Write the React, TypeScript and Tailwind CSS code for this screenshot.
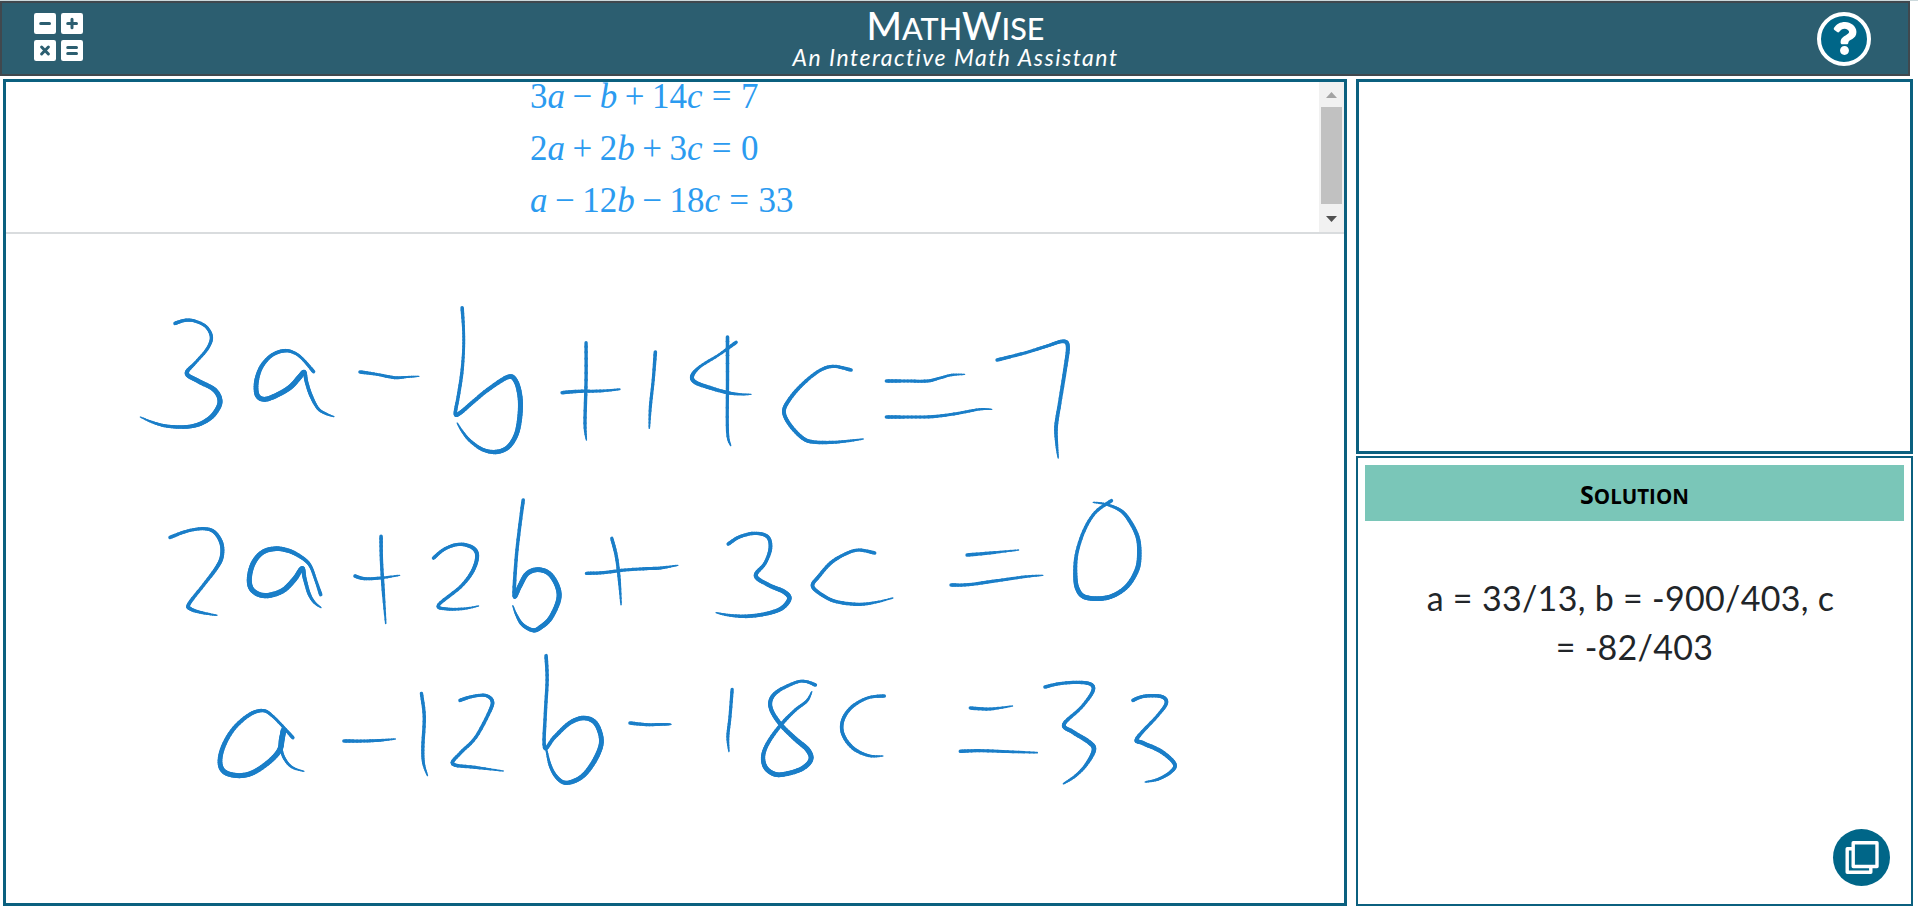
import React from "react";
import { FaQuestion } from "react-icons/fa";

type Sample = [x: number, y: number, width: number];

interface InkGroup {
  x: number;
  y: number;
  strokes: Sample[][];
}

const UNIT_X = 2.8;
const UNIT_Y = 3;
const PEN_SCALE = 1.2;

const INK: InkGroup[] = [
  {
    x: 94,
    y: 46,
    strokes: [
      [[210, 130, 3], [238, 121, 2.8], [265, 123, 2.5], [297, 140, 2.5], [312, 172, 2.8], [300, 207, 2.6], [268, 247, 2.4], [243, 280, 3.6], [275, 303, 3.8], [321, 330, 4], [336, 366, 4.2], [318, 404, 4], [288, 428, 3.6], [255, 439, 3.2], [220, 441, 3], [180, 437, 2.6], [145, 426, 2], [113, 411, 1]],
      [[598, 275, 3], [570, 240, 2.4], [547, 220, 2.4], [518, 212, 3], [482, 225, 3], [452, 260, 3.4], [438, 305, 4], [440, 345, 4], [460, 358, 4], [492, 347, 4.2], [532, 322, 4.4], [558, 292, 4.4], [572, 276, 3.4], [578, 305, 3], [590, 345, 3], [610, 385, 2.4], [632, 401, 2], [655, 410, 1]],
      [[728, 276, 3], [775, 283, 2.4], [825, 293, 2.6], [860, 291, 1.8], [893, 289, 1]],
      [[1014, 83, 3], [1018, 150, 2.4], [1018, 210, 2.4], [1013, 280, 2.8], [1003, 350, 2.8], [995, 401, 3], [1008, 399, 3.4], [1040, 370, 3.2], [1085, 330, 3.4], [1142, 291, 3.8], [1164, 303, 4], [1176, 350, 4.2], [1176, 405, 4.2], [1166, 462, 4], [1142, 502, 3.8], [1108, 516, 3.6], [1070, 508, 3], [1035, 481, 2.6], [1015, 455, 2], [1000, 429, 1]],
      [[1361, 188, 2.8], [1361, 300, 2.8], [1358, 430, 2.8], [1362, 480, 1]],
      [[1294, 338, 3], [1340, 334, 2.8], [1400, 333, 2.4], [1455, 328, 1.6]],
      [[1555, 216, 3], [1549, 300, 2.6], [1541, 380, 2.6], [1538, 445, 1.2]],
    ],
  },
  {
    x: 634,
    y: 46,
    strokes: [
      [[269, 187, 3], [220, 225, 2.2], [168, 260, 2.4], [146, 288, 3.4], [155, 307, 3.4], [195, 323, 3.2], [245, 338, 2.8], [283, 343, 1.8], [311, 343, 1]],
      [[245, 171, 3], [245, 300, 2.8], [245, 455, 2.6], [254, 497, 1]],
      [[591, 270, 3], [540, 259, 2.6], [498, 275, 2.8], [450, 318, 3], [416, 362, 3.2], [403, 396, 3.2], [420, 435, 3.2], [455, 474, 3.2], [485, 486, 3], [540, 487, 2.6], [590, 482, 2], [625, 477, 1]],
      [[690, 303, 3], [750, 303, 2.6], [805, 303, 2.6], [840, 294, 2.2], [872, 285, 2], [909, 283, 1]],
      [[690, 411, 3], [750, 411, 2.6], [820, 410, 2.6], [890, 400, 2.4], [950, 388, 2], [985, 388, 1]],
      [[1000, 240, 3], [1080, 218, 2.6], [1140, 198, 2.8], [1184, 184, 3], [1198, 200, 3.4], [1190, 270, 3.2], [1175, 370, 3], [1165, 440, 3.2], [1167, 495, 2.4], [1171, 534, 1]],
    ],
  },
  {
    x: 94,
    y: 246,
    strokes: [
      [[196, 172, 3], [245, 153, 2.6], [290, 146, 2.6], [320, 156, 3], [340, 190, 3.4], [341, 230, 3.4], [326, 264, 3.2], [290, 315, 2.8], [249, 372, 3], [254, 387, 3], [285, 398, 2.4], [327, 406, 1.2]],
      [[618, 344, 3], [604, 300, 2.4], [590, 260, 2.6], [572, 238, 3], [535, 215, 3.6], [494, 206, 4], [455, 217, 4], [428, 252, 4.2], [418, 300, 4.2], [428, 332, 4.2], [462, 347, 4.4], [510, 333, 4.4], [545, 297, 4.4], [566, 265, 3.8], [573, 295, 3.2], [585, 340, 2.8], [600, 367, 2.2], [619, 383, 1]],
      [[787, 169, 3], [788, 240, 2.8], [793, 330, 2.8], [800, 430, 1.2]],
      [[714, 288, 3], [740, 296, 2.6], [785, 294, 2.4], [839, 286, 1]],
      [[934, 234, 3], [965, 207, 2.6], [1005, 193, 2.8], [1042, 202, 3.2], [1056, 227, 3.4], [1044, 272, 3.2], [1010, 320, 2.8], [948, 375, 2.8], [972, 387, 2.6], [1020, 386, 2], [1060, 378, 1]],
      [[1185, 60, 3], [1174, 150, 2.8], [1165, 240, 2.8], [1160, 347, 3.2], [1175, 319, 4], [1195, 282, 4], [1225, 269, 4], [1258, 281, 4], [1281, 320, 4.2], [1284, 360, 4.2], [1262, 413, 4], [1236, 440, 4], [1213, 451, 3.4], [1183, 434, 3], [1166, 405, 2], [1156, 377, 1]],
      [[1433, 175, 2.8], [1446, 230, 2.8], [1454, 300, 2.6], [1459, 374, 1.2]],
      [[1362, 280, 2.8], [1410, 278, 2.6], [1470, 270, 2.6], [1530, 266, 2.6], [1570, 264, 2.6], [1618, 256, 1]],
      [[540, 773, 3], [515, 743, 2.4], [485, 710, 2.4], [458, 692, 2.8], [420, 703, 3.2], [375, 745, 3.4], [345, 800, 3.8], [336, 848, 4], [350, 877, 4.2], [390, 887, 4.2], [430, 877, 4.2], [475, 844, 4.2], [503, 810, 4.4], [509, 778, 4.8], [514, 750, 4.6]],
      [[505, 800, 2.6], [516, 835, 2.4], [538, 862, 2], [571, 874, 1]],
      [[683, 783, 3], [740, 783, 2.6], [785, 781, 2.4], [827, 777, 1]],
      [[900, 640, 2.8], [908, 710, 2.8], [904, 800, 2.8], [906, 850, 2.4], [917, 887, 1]],
      [[1008, 661, 3], [1040, 650, 2.6], [1078, 646, 2.6], [1098, 662, 3], [1092, 692, 3], [1052, 772, 2.8], [1010, 818, 2.8], [988, 852, 3], [1050, 862, 2.6], [1129, 873, 1]],
      [[1249, 527, 3], [1252, 600, 2.8], [1247, 700, 2.8], [1245, 803, 3], [1272, 772, 3.2], [1315, 729, 3.6], [1355, 714, 3.8], [1388, 730, 4], [1404, 780, 4], [1392, 827, 4.2], [1362, 877, 4], [1332, 901, 3.8], [1300, 908, 3.4], [1276, 888, 3], [1260, 855, 2.6], [1250, 810, 1.6]],
      [[1484, 729, 3], [1530, 734, 2.6], [1580, 733, 2.4], [1599, 733, 1]],
    ],
  },
  {
    x: 634,
    y: 246,
    strokes: [
      [[247, 192, 3], [278, 171, 2.8], [320, 160, 2.8], [357, 170, 3], [365, 205, 3.2], [350, 250, 2.8], [324, 287, 3.4], [358, 314, 3.4], [404, 336, 3.8], [418, 357, 3.8], [395, 386, 3.6], [350, 402, 3.2], [295, 409, 3], [245, 405, 2.2], [213, 398, 1]],
      [[657, 219, 3], [612, 210, 2.6], [575, 222, 2.6], [535, 248, 3], [500, 290, 3], [483, 318, 3], [510, 345, 3], [550, 365, 2.8], [610, 373, 2.8], [660, 367, 2], [708, 354, 1]],
      [[916, 225, 3], [980, 219, 2.6], [1060, 210, 1]],
      [[871, 315, 3], [920, 314, 2.6], [1000, 302, 2.6], [1080, 290, 2.2], [1128, 286, 1]],
      [[1320, 62, 3], [1275, 97, 2.6], [1243, 153, 2.8], [1222, 225, 3], [1219, 290, 3.6], [1225, 327, 3.8], [1243, 350, 4], [1283, 356, 4], [1325, 347, 3.8], [1365, 317, 3.8], [1392, 268, 4], [1398, 220, 3.8], [1393, 170, 3.4], [1370, 121, 3.2], [1345, 91, 2.8], [1305, 73, 2], [1269, 67, 1]],
      [[258, 628, 2.8], [252, 710, 2.6], [246, 770, 2.6], [249, 815, 1]],
      [[491, 615, 3], [466, 605, 2.4], [440, 606, 2.4], [388, 632, 3], [366, 660, 3.4], [369, 693, 3.4], [396, 736, 3.6], [435, 777, 4], [470, 810, 4.2], [478, 840, 4], [450, 868, 4], [395, 884, 4], [366, 877, 4], [348, 855, 3.8], [346, 820, 3.4], [365, 777, 3.2], [400, 728, 3], [435, 690, 2.6], [467, 663, 2.4], [481, 635, 1]],
      [[684, 648, 3], [640, 653, 2.4], [594, 680, 2.8], [568, 720, 3], [568, 762, 3], [596, 804, 3], [640, 827, 2.4], [680, 828, 1]],
      [[925, 684, 3], [980, 687, 2.6], [1043, 678, 1]],
      [[897, 814, 3], [950, 812, 2.6], [1030, 815, 2.4], [1112, 818, 1.4]],
      [[1134, 621, 3], [1175, 611, 2.6], [1230, 607, 2.8], [1264, 614, 3], [1267, 636, 3], [1235, 683, 2.6], [1187, 733, 3.2], [1212, 756, 3.6], [1258, 787, 3.8], [1271, 810, 3.8], [1250, 853, 2.8], [1220, 887, 2.4], [1186, 911, 1.4]],
      [[1380, 661, 3], [1410, 649, 2.8], [1458, 649, 3], [1474, 668, 3], [1450, 706, 2.6], [1392, 775, 3.2], [1408, 789, 3.6], [1460, 815, 3.6], [1497, 852, 3.2], [1485, 877, 2.8], [1450, 898, 2.4], [1415, 906, 1.2]],
    ],
  },
];

const STEPS = 6;

function spline(a: number, b: number, c: number, d: number, t: number) {
  return 0.5 * (2 * b + (c - a) * t + (2 * a - 5 * b + 4 * c - d) * t * t + (3 * b - a - 3 * c + d) * t * t * t);
}

function smooth(points: Sample[]): Sample[] {
  const out: Sample[] = [points[0]];
  for (let i = 0; i < points.length - 1; i++) {
    const p0 = points[Math.max(0, i - 1)];
    const p1 = points[i];
    const p2 = points[i + 1];
    const p3 = points[Math.min(points.length - 1, i + 2)];
    for (let s = 1; s <= STEPS; s++) {
      const t = s / STEPS;
      out.push([
        spline(p0[0], p1[0], p2[0], p3[0], t),
        spline(p0[1], p1[1], p2[1], p3[1], t),
        p1[2] + (p2[2] - p1[2]) * t,
      ]);
    }
  }
  return out;
}

function Stroke({ points, x, y }: { points: Sample[]; x: number; y: number }) {
  const path = smooth(points).map(([px, py, w]): Sample => [x + px / UNIT_X, y + py / UNIT_Y, w * PEN_SCALE]);
  return (
    <g>
      {path.slice(1).map((p, i) => (
        <line key={i} x1={path[i][0]} y1={path[i][1]} x2={p[0]} y2={p[1]} strokeWidth={(path[i][2] + p[2]) / 2} />
      ))}
    </g>
  );
}

function InkCanvas() {
  return (
    <svg className="block h-full w-full" viewBox="0 0 1338 669" stroke="#1a7ec8" strokeLinecap="round" fill="none">
      {INK.map((g, i) => g.strokes.map((s, j) => <Stroke key={`${i}-${j}`} points={s} x={g.x} y={g.y} />))}
    </svg>
  );
}

function Logo() {
  return (
    <svg className="mb-1 h-12 w-[49px]" viewBox="0 0 49 48">
      <g fill="#fff">
        <rect x="0" y="0" width="22" height="21" rx="2.2" />
        <rect x="27" y="0" width="22" height="21" rx="2.2" />
        <rect x="0" y="27" width="22" height="21" rx="2.2" />
        <rect x="27" y="27" width="22" height="21" rx="2.2" />
      </g>
      <g stroke="#2c5e70" strokeWidth="3" strokeLinecap="round">
        <path d="M6.7 10.5h8.8M33.7 10.5h8.8M38 6.2v8.6M7.6 34l6.8 7M14.4 34l-6.8 7M33.7 34.5h8.8M33.7 40.5h8.8" />
      </g>
    </svg>
  );
}

function Var({ children }: { children: string }) {
  return <span className="italic">{children}</span>;
}

function Op({ children }: { children: string }) {
  return <span className="mx-[7.5px]">{children}</span>;
}

function Eq() {
  return <span className="mx-[9.3px]">=</span>;
}

function Header() {
  return (
    <header className="flex h-[75px] w-[1910px] items-center justify-between border-2 border-[#40484e] bg-[#2c5e70] pr-[37px] pl-8">
      <Logo />
      <div className="mb-1 ml-[11px] flex flex-col items-center text-white">
        <h1 className="font-[Lato,sans-serif] text-[38px] leading-[42px] font-medium whitespace-nowrap">
          M<span className="text-[30.5px] uppercase">ath</span>W<span className="text-[30.5px] uppercase">ise</span>
        </h1>
        <p className="-mt-1 font-[Lato,sans-serif] text-[23px] leading-6 tracking-[1.5px] whitespace-nowrap italic">
          An Interactive Math Assistant
        </p>
      </div>
      <button className="flex size-[54px] items-center justify-center rounded-full border-4 border-white bg-[#006688] text-white">
        <FaQuestion className="h-[33px] w-[25px]" />
      </button>
    </header>
  );
}

function Scrollbar() {
  return (
    <div className="flex w-[25px] flex-col items-center bg-[#f1f1f1]">
      <svg className="h-[25px] w-[25px]" viewBox="0 0 25 25">
        <path d="M7 16L12.5 10L18 16z" fill="#a3a3a3" />
      </svg>
      <div className="h-[97px] w-[21px] bg-[#c1c1c1]" />
      <svg className="h-[25px] w-[25px]" viewBox="0 0 25 25">
        <path d="M7 12L12.5 18L18 12z" fill="#505050" />
      </svg>
    </div>
  );
}

export default function App() {
  return (
    <div className="h-[909px] w-[1918px] overflow-hidden border-t border-[#ccd9dc] bg-white">
      <Header />
      <main className="mt-[3px] ml-[3px] flex h-[827px] gap-[9px]">
        <section className="flex w-[1344px] flex-col border-3 border-[#0b607f]">
          <div className="flex h-[152px] justify-between overflow-hidden border-b-2 border-[#d9dcde]">
            <div className="-mt-[11px] pl-[524px] font-['Liberation_Serif',serif] text-[35px] leading-[52px] whitespace-nowrap text-[#2b9bf0]">
              <p>3<Var>a</Var><Op>−</Op><Var>b</Var><Op>+</Op>14<Var>c</Var><Eq />7</p>
              <p>2<Var>a</Var><Op>+</Op>2<Var>b</Var><Op>+</Op>3<Var>c</Var><Eq />0</p>
              <p><Var>a</Var><Op>−</Op>12<Var>b</Var><Op>−</Op>18<Var>c</Var><Eq />33</p>
            </div>
            <Scrollbar />
          </div>
          <div className="min-h-0 flex-1">
            <InkCanvas />
          </div>
        </section>
        <aside className="flex w-[557px] flex-col gap-0.5">
          <section className="h-[375px] border-3 border-[#0b607f]" />
          <section className="flex flex-1 flex-col border-2 border-[#0b607f] px-[7px] pt-[7px] pb-[18px]">
            <h2 className="h-14 bg-[#7ac6b8] text-center font-['Open_Sans',sans-serif] text-[25px] leading-[59px] font-bold text-black">
              S<span className="text-[20.5px] uppercase">olution</span>
            </h2>
            <p className="mt-[52px] px-10 text-center font-[Lato,sans-serif] text-[34px] leading-[49px] tracking-[0.3px] text-[#212529]">
              <span className="mr-2">a = 33/13, b = -900/403, c</span>
              <br />= -82/403
            </p>
            <button className="mt-auto mr-[14px] flex size-[57px] items-center justify-center self-end rounded-full bg-[#006688]">
              <svg className="h-[33px] w-[34px]" viewBox="0 0 34 33" fill="none" stroke="#fff" strokeWidth="3.4" strokeLinejoin="round">
                <path d="M8.2 7.7H2.2V31.3H25.8V25.3" />
                <rect x="8.2" y="1.7" width="23.8" height="23.8" fill="#006688" />
              </svg>
            </button>
          </section>
        </aside>
      </main>
    </div>
  );
}
